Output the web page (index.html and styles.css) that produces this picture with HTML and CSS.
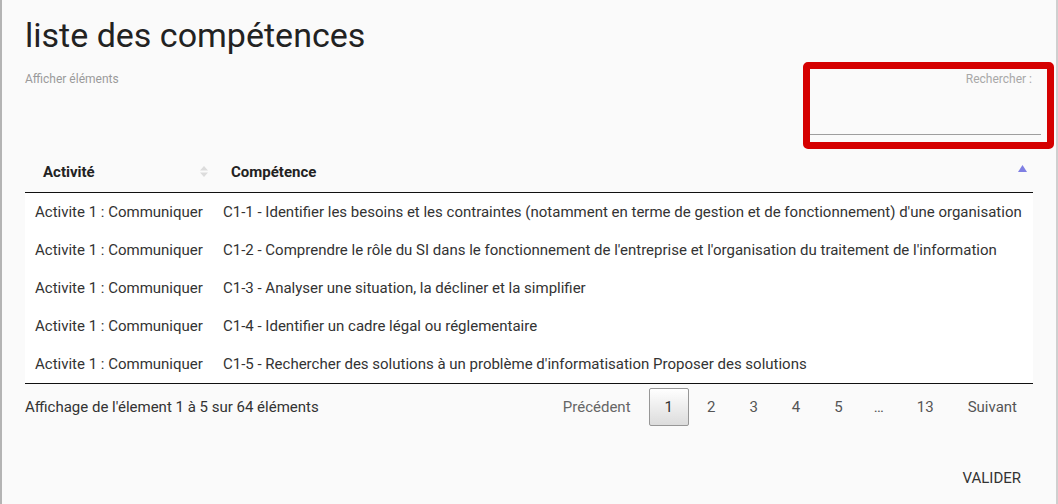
FILE: index.html
```html
<!DOCTYPE html>
<html lang="fr">
<head>
<meta charset="utf-8">
<title>liste des compétences</title>
<link rel="stylesheet" href="styles.css">
</head>
<body>
<div class="modal">
  <h1 class="title">liste des compétences</h1>
  <div class="toolbar">
    <div class="length">Afficher éléments</div>
    <div class="search-box">
      <label class="search-label">Rechercher :</label>
      <div class="search-input"></div>
    </div>
  </div>
  <table class="grid">
    <colgroup><col class="col-act"><col class="col-comp"></colgroup>
    <thead>
      <tr>
        <th class="sortable">Activité
          <svg class="sort-both" width="8" height="11" viewBox="0 0 8 11"><path d="M4 0 L8 4.5 L0 4.5 Z M0 6.5 L8 6.5 L4 11 Z" fill="#dcdcdc"/></svg>
        </th>
        <th class="sortable">Compétence
          <svg class="sort-asc" width="9" height="7" viewBox="0 0 9 7"><path d="M4.5 0 L9 7 L0 7 Z" fill="#7f7fe3"/></svg>
        </th>
      </tr>
    </thead>
    <tbody>
      <tr><td>Activite 1 : Communiquer</td><td>C1-1 - Identifier les besoins et les contraintes (notamment en terme de gestion et de fonctionnement) d'une organisation</td></tr>
      <tr><td>Activite 1 : Communiquer</td><td>C1-2 - Comprendre le rôle du SI dans le fonctionnement de l'entreprise et l'organisation du traitement de l'information</td></tr>
      <tr><td>Activite 1 : Communiquer</td><td>C1-3 - Analyser une situation, la décliner et la simplifier</td></tr>
      <tr><td>Activite 1 : Communiquer</td><td>C1-4 - Identifier un cadre légal ou réglementaire</td></tr>
      <tr><td>Activite 1 : Communiquer</td><td>C1-5 - Rechercher des solutions à un problème d'informatisation Proposer des solutions</td></tr>
    </tbody>
  </table>
  <div class="footer">
    <div class="info">Affichage de l'élement 1 à 5 sur 64 éléments</div>
    <div class="paginate">
      <a class="pbtn disabled">Précédent</a>
      <a class="pbtn current">1</a>
      <a class="pbtn">2</a>
      <a class="pbtn">3</a>
      <a class="pbtn">4</a>
      <a class="pbtn">5</a>
      <span class="ellipsis">…</span>
      <a class="pbtn">13</a>
      <a class="pbtn">Suivant</a>
    </div>
  </div>
  <div class="actions">
    <button class="btn-valider">Valider</button>
  </div>
</div>
</body>
</html>
```

FILE: styles.css
```css
html, body {
  margin: 0;
  padding: 0;
  background: #fafafa;
}
body {
  font-family: Roboto, "Liberation Sans", sans-serif;
  color: #333;
}
.modal {
  box-sizing: border-box;
  width: 1058px;
  height: 504px;
  border-left: 2px solid #b4b4b4;
  border-right: 2px solid #cfcfcf;
  padding: 0 23px 0 23px;
  background: #fafafa;
  overflow: hidden;
}
.title {
  margin: 0;
  padding-top: 15px;
  font-size: 34px;
  line-height: 40px;
  font-weight: 400;
  color: #222;
}
.toolbar {
  display: flex;
  justify-content: space-between;
  align-items: flex-start;
  width: 1008px;
}
.length {
  margin-top: 17px;
  font-size: 12px;
  line-height: 14px;
  color: #9a9a9a;
}
.search-box {
  box-sizing: border-box;
  margin-top: 7px;
  margin-right: -21px;
  width: 251px;
  height: 87px;
  border: 7px solid #d50000;
  border-radius: 5px;
  padding-top: 3px;
  display: flex;
  flex-direction: column;
}
.search-label {
  font-size: 12px;
  line-height: 14px;
  color: #a8a8a8;
  text-align: right;
  padding-right: 15px;
}
.search-input {
  margin-top: auto;
  margin-right: 6px;
  margin-bottom: 7px;
  border-bottom: 1px solid #9e9e9e;
}
.grid {
  width: 1008px;
  margin-top: 3px;
  border-collapse: collapse;
  table-layout: fixed;
  font-size: 15px;
}
.col-act { width: 188px; }
.grid th {
  position: relative;
  text-align: left;
  font-weight: 700;
  font-size: 15px;
  line-height: 20px;
  padding: 10px 18px 10px 18px;
  color: #222;
  border-bottom: 1px solid #111;
  white-space: nowrap;
}
.sort-both {
  position: absolute;
  right: 5px;
  top: 14px;
}
.sort-asc {
  position: absolute;
  right: 6px;
  top: 13px;
}
.grid tbody tr {
  background: #fff;
}
.grid td {
  padding: 8px 10px;
  line-height: 22px;
  white-space: nowrap;
  color: #333;
}
.grid tbody tr:last-child td {
  border-bottom: 1px solid #111;
}
.footer {
  display: flex;
  justify-content: space-between;
  align-items: center;
  width: 1008px;
  margin-top: 4px;
}
.info {
  font-size: 15px;
  color: #333;
}
.paginate {
  display: flex;
  align-items: center;
  font-size: 15px;
}
.pbtn {
  box-sizing: border-box;
  display: inline-block;
  min-width: 22px;
  padding: 7px 15px;
  margin-left: 2px;
  line-height: 22px;
  border: 1px solid transparent;
  border-radius: 2px;
  color: #555;
  text-align: center;
  cursor: pointer;
}
.pbtn.disabled {
  color: #666;
}
.pbtn.current {
  color: #333;
  border-color: #979797;
  background: linear-gradient(to bottom, #ffffff 0%, #dcdcdc 100%);
}
.ellipsis {
  padding: 0 15px;
  color: #555;
}
.actions {
  display: flex;
  justify-content: flex-end;
  width: 1008px;
  margin-top: 34px;
}
.btn-valider {
  margin-right: -4px;
  height: 36px;
  padding: 0 16px;
  border: none;
  background: transparent;
  font-family: Roboto, "Liberation Sans", sans-serif;
  font-size: 15px;
  text-transform: uppercase;
  color: #333;
  cursor: pointer;
}
```
